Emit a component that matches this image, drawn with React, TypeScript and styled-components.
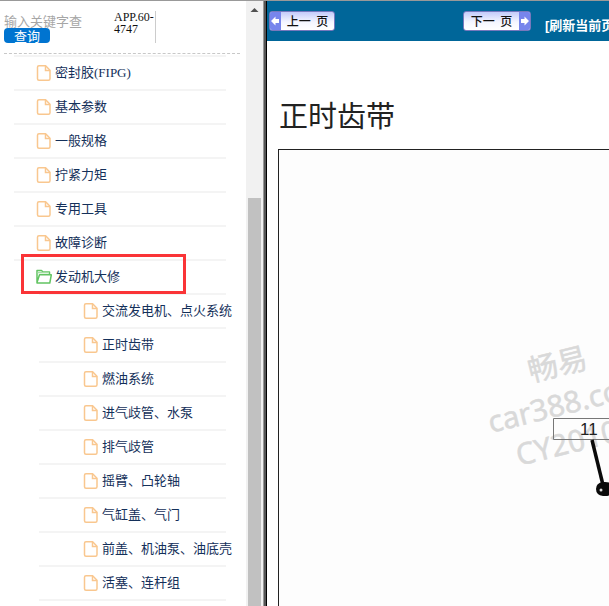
import React from "react";
import styled, { createGlobalStyle } from "styled-components";

const GlobalStyle = createGlobalStyle`
  * { box-sizing: border-box; }
  html, body { margin: 0; overflow: hidden; background: #fff; }
  body { font-family: "Liberation Serif", "Noto Sans CJK SC", serif; font-size: 13px; }
`;

const Page = styled.div`
  display: grid;
  grid-template-columns: 246px 17px 4px minmax(0, 1fr);
  height: 100vh;
  overflow: hidden;
  border-top: 1px solid #999;
`;

const Sidebar = styled.aside`
  overflow: hidden;
`;

const SearchForm = styled.form`
  display: flex;
  height: 53px;
  margin: 0 6px 0 4px;
  padding-top: 10px;
  border-bottom: 1px dashed #c8c8c8;
`;

const SearchFields = styled.div`
  display: flex;
  flex-direction: column;
  align-items: flex-start;
  width: 110px;
  padding-top: 2px;
`;

const Keyword = styled.input`
  width: 78px;
  height: 15px;
  padding: 0;
  border: 0;
  outline: 0;
  background: transparent;
  font: 13px/15px "Noto Sans CJK SC", sans-serif;
  &::placeholder { color: #a6a6a6; opacity: 1; }
`;

const SearchButton = styled.button`
  width: 46px;
  height: 15px;
  padding: 0;
  border: 0;
  border-radius: 4px;
  background: #0074d0;
  color: #fff;
  font: 13px/13px "Noto Sans CJK SC", sans-serif;
`;

const Version = styled.div`
  width: 42px;
  height: 32px;
  border-right: 1px solid #ccc;
  color: #111;
  font-size: 12px;
  line-height: 12px;
`;

const Tree = styled.ul`
  margin: 1px 0 0 14px;
  padding: 0;
  list-style: none;
`;

const SubTree = styled.ul`
  margin: 0 0 0 25px;
  padding: 0;
  list-style: none;
`;

const Node = styled.li`
  position: relative;
`;

const NodeLink = styled.a<{ $nested?: boolean }>`
  display: flex;
  align-items: center;
  gap: 3px;
  height: 34px;
  padding-top: 2px;
  padding-left: ${(p) => (p.$nested ? 44 : 22)}px;
  background: linear-gradient(#f4f4f4, #f4f4f4) 0 0 / calc(100% - 20px) 2px no-repeat;
  color: #14305a;
  line-height: 32px;
  white-space: nowrap;
  text-decoration: none;
`;

const Highlight = styled.div`
  position: absolute;
  z-index: 1;
  top: -5px;
  left: 7px;
  width: 165px;
  height: 40px;
  border: 3px solid #fa3437;
  pointer-events: none;
`;

const ScrollTrack = styled.div`
  display: flex;
  flex-direction: column;
  padding: 0 2px;
  background: #f1f1f1;
`;

const ScrollArrow = styled.svg`
  flex: none;
  width: 13px;
  height: 197px;
`;

const ScrollThumb = styled.div`
  flex: 1;
  background: #c1c1c1;
`;

const Divider = styled.div`
  border-left: 1px solid #999;
  border-right: 1px solid #000;
  background: #555;
`;

const Main = styled.main`
  display: flex;
  flex-direction: column;
  overflow: hidden;
`;

const Toolbar = styled.nav`
  display: flex;
  flex: none;
  align-items: center;
  height: 40px;
  padding-left: 2px;
  background: #069;
`;

const PageButton = styled.button<{ $next?: boolean }>`
  display: flex;
  flex: none;
  flex-direction: ${(p) => (p.$next ? "row-reverse" : "row")};
  width: ${(p) => (p.$next ? 68 : 66)}px;
  height: 20px;
  margin-right: ${(p) => (p.$next ? 14 : 128)}px;
  padding: 0;
  overflow: hidden;
  border: 1px solid #7778bd;
  border-radius: 3px;
  background: linear-gradient(#c3cbfa, #f4f6ff 55%, #fff);
  color: #111;
  font: 500 12px/17px "Noto Sans CJK SC", sans-serif;
`;

const PageLabel = styled.span`
  flex: 1;
  white-space: pre;
`;

const PageArrow = styled.svg`
  flex: none;
  width: 11px;
  height: 18px;
  background: #7785ec;
`;

const RefreshLink = styled.a`
  padding-top: 10px;
  color: #fff;
  font: bold 13px/20px "Liberation Sans", "Noto Sans CJK SC", sans-serif;
  white-space: nowrap;
  text-decoration: none;
`;

const Title = styled.h1`
  flex: none;
  margin: 51px 0 0 12px;
  color: #222;
  font: 400 29px/44px "Noto Sans CJK SC", sans-serif;
`;

const Figure = styled.figure`
  flex: 1;
  min-height: 0;
  margin: 13px 0 0 11px;
  border: solid #222;
  border-width: 1px 0 0 1px;
  background: #fdfdfd;
`;

const Drawing = styled.svg`
  display: block;
  width: 100%;
  height: 100%;
  font-family: "Noto Sans", "Noto Sans CJK SC", sans-serif;
`;

const FileIcon = () => (
  <svg width="16" height="16" viewBox="0 0 16 16" fill="none" stroke="#f9c78f" strokeWidth="1.5" aria-hidden="true">
    <path d="M3 .8h6.6L14 5.2v8.5q0 1.5-1.5 1.5H3q-1.5 0-1.5-1.5V2.3Q1.5 .8 3 .8Z" />
    <path d="M9.5 1v4.5H14" />
  </svg>
);

const FolderIcon = () => (
  <svg width="16" height="16" viewBox="0 0 16 16" fill="none" stroke="#62c462" strokeWidth="1.5" strokeLinejoin="round" aria-hidden="true">
    <path d="M1 13.5V1.500H5.500L7 3H13.500V5.500M1 13.500 3.500 5.800H15.300L13.800 14H1Z" />
    <path d="M1.500 3.600H13" stroke="#a4dda4" />
  </svg>
);

const topics = ["密封胶(FIPG)", "基本参数", "一般规格", "拧紧力矩", "专用工具", "故障诊断"];
const repairs = [
  "交流发电机、点火系统", "正时齿带", "燃油系统", "进气歧管、水泵", "排气歧管",
  "摇臂、凸轮轴", "气缸盖、气门", "前盖、机油泵、油底壳", "活塞、连杆组",
];

export default function App() {
  return (
    <>
      <GlobalStyle />
      <Page>
        <Sidebar>
          <SearchForm onSubmit={(e) => e.preventDefault()}>
            <SearchFields>
              <Keyword aria-label="关键字" placeholder="输入关键字查询" />
              <SearchButton type="submit">查询</SearchButton>
            </SearchFields>
            <Version>APP.60-4747</Version>
          </SearchForm>
          <Tree>
            {topics.map((t) => (
              <Node key={t}>
                <NodeLink href="#"><FileIcon />{t}</NodeLink>
              </Node>
            ))}
            <Node>
              <Highlight />
              <NodeLink href="#"><FolderIcon />发动机大修</NodeLink>
              <SubTree>
                {repairs.map((t) => (
                  <Node key={t}>
                    <NodeLink href="#" $nested><FileIcon />{t}</NodeLink>
                  </Node>
                ))}
                <Node><NodeLink as="span" $nested /></Node>
              </SubTree>
            </Node>
          </Tree>
        </Sidebar>
        <ScrollTrack>
          <ScrollArrow viewBox="0 0 13 197" aria-hidden="true">
            <path d="M2.5 11 6.5 7 10.5 11Z" fill="#505050" />
          </ScrollArrow>
          <ScrollThumb />
        </ScrollTrack>
        <Divider />
        <Main>
          <Toolbar>
            <PageButton type="button">
              <PageArrow viewBox="0 0 11 18" aria-hidden="true">
                <path d="M1 9 5.5 4.5V7H9v4H5.5v2.5Z" fill="#fff" />
              </PageArrow>
              <PageLabel>上一  页</PageLabel>
            </PageButton>
            <PageButton type="button" $next>
              <PageArrow viewBox="0 0 11 18" aria-hidden="true">
                <path d="M10 9 5.5 4.5V7H2v4h3.5v2.5Z" fill="#fff" />
              </PageArrow>
              <PageLabel>下一  页</PageLabel>
            </PageButton>
            <RefreshLink href="#">[刷新当前页]</RefreshLink>
          </Toolbar>
          <Title>正时齿带</Title>
          <Figure>
            <Drawing role="img" aria-label="正时齿带">
              <g fill="#d9d9d9" stroke="#d9d9d9" strokeWidth="0.5">
                <text transform="translate(252 232) rotate(-14)" fontSize="30">畅易</text>
                <text transform="translate(212 283) rotate(-14)" fontSize="30">car388.com</text>
                <text transform="translate(240 316) rotate(-14)" fontSize="30">CY2010</text>
              </g>
              <path d="M400 268.5H274.5v21H400" fill="none" stroke="#777" />
              <text x="301" y="285" fontSize="17" fill="#222" fontFamily="Liberation Sans">11</text>
              <path d="M313 290 324 335" stroke="#0a0a0a" strokeWidth="3.5" />
              <path d="M317 339q0-6 7-7 10-1 12 7-2 8-12 7-7-1-7-7Z" fill="#0a0a0a" />
              <circle cx="322" cy="340" r="1.5" fill="#ddd" />
            </Drawing>
          </Figure>
        </Main>
      </Page>
    </>
  );
}
